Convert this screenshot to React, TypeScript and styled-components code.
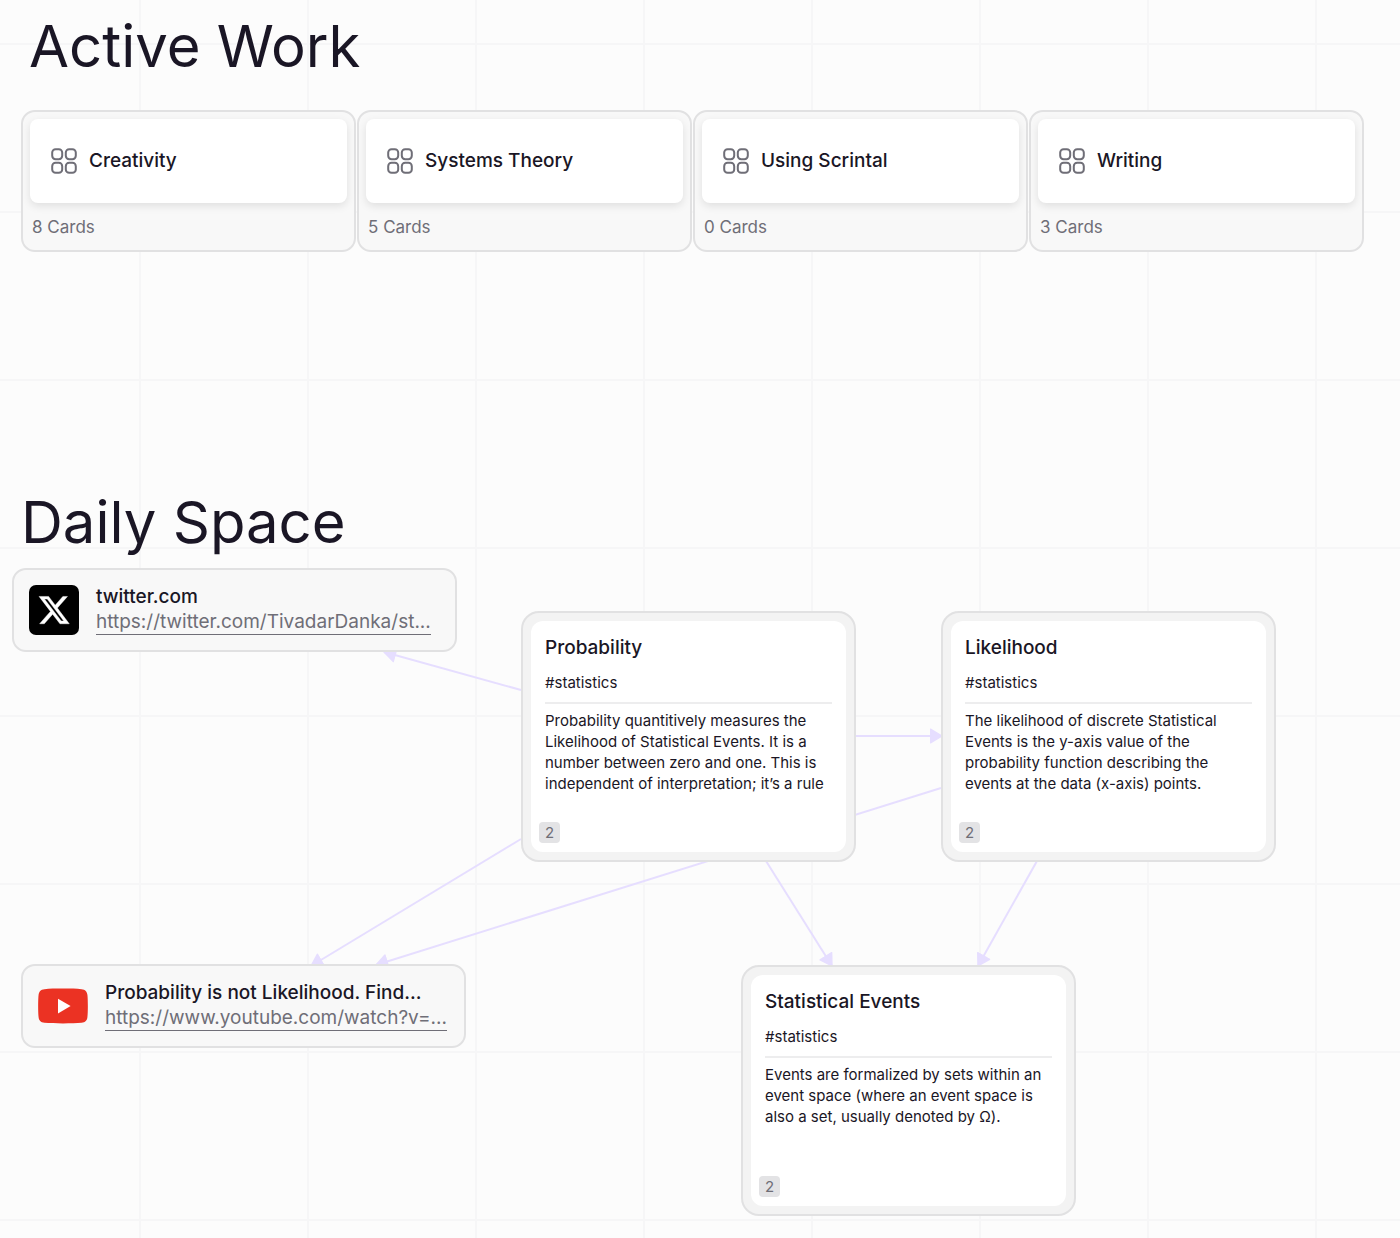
import React from "react";
import styled, { createGlobalStyle } from "styled-components";

const color = {
  canvas: "#fcfcfc",
  grid: "#f6f6f7",
  ink: "#1a1625",
  muted: "#6f6e77",
  border: "#e1e1e2",
  surface: "#f8f8f8",
  surfaceDeep: "#f3f3f3",
  arrow: "#e6deff",
};

const GlobalStyle = createGlobalStyle`
  * { box-sizing: border-box; }
  body {
    margin: 0;
    background: ${color.canvas};
    color: ${color.ink};
    font-family: Inter, "Liberation Sans", sans-serif;
  }
  h1, h2, p, ul { margin: 0; padding: 0; }
`;

const Canvas = styled.main`
  position: relative;
  min-height: 100vh;
  overflow: hidden;
  background-color: ${color.canvas};
  background-image: linear-gradient(90deg, ${color.grid} 2px, transparent 2px),
    linear-gradient(${color.grid} 2px, transparent 2px);
  background-size: 168px 168px;
  background-position: 139px 43px;
`;

const Node = styled.div<{ $x: number; $y: number }>`
  position: absolute;
  left: ${(p) => p.$x}px;
  top: ${(p) => p.$y}px;
`;

const Title = styled.h1`
  font-size: 58px;
  line-height: 72px;
  font-weight: 400;
  white-space: nowrap;
`;

const BoardRow = styled.ul`
  display: flex;
  gap: 1px;
  list-style: none;
`;

const Board = styled.li`
  width: 335px;
  padding: 7px;
  border: 2px solid ${color.border};
  border-radius: 14px;
  background: ${color.surface};
`;

const BoardFace = styled.div`
  display: flex;
  align-items: center;
  gap: 12px;
  height: 84px;
  padding: 0 21px;
  border-radius: 8px;
  background: #fff;
  box-shadow: 0 3px 8px rgba(0, 0, 0, 0.1);
`;

const ItemTitle = styled.h2`
  font-size: 19px;
  line-height: 24px;
  font-weight: 500;
  white-space: nowrap;
`;

const BoardCount = styled.p`
  padding: 12px 2px 4px;
  font-size: 17px;
  line-height: 24px;
  color: ${color.muted};
`;

const NoteFrame = styled.article`
  width: 335px;
  padding: 8px;
  border: 2px solid ${color.border};
  border-radius: 18px;
  background: ${color.surfaceDeep};
`;

const NoteFace = styled.div`
  display: flex;
  flex-direction: column;
  min-height: 231px;
  padding: 15px 14px 9px;
  border-radius: 12px;
  background: #fff;
`;

const NoteTag = styled.p`
  padding: 13px 0 9px;
  border-bottom: 2px solid #ededee;
  font-size: 15px;
  line-height: 20px;
`;

const NoteText = styled.p`
  padding-top: 6px;
  font-size: 15px;
  line-height: 21px;
`;

const Count = styled.span`
  align-self: flex-start;
  min-width: 21px;
  margin-top: auto;
  margin-left: -6px;
  border-radius: 4px;
  background: #e3e3e5;
  color: ${color.muted};
  font-size: 15px;
  line-height: 21px;
  text-align: center;
`;

const Bookmark = styled.article`
  display: flex;
  align-items: center;
  gap: 17px;
  width: 445px;
  height: 84px;
  padding: 0 15px;
  border: 2px solid ${color.border};
  border-radius: 14px;
  background: ${color.surface};
`;

const Link = styled.a`
  display: block;
  width: fit-content;
  border-bottom: 1px solid ${color.muted};
  color: ${color.muted};
  font-size: 19px;
  line-height: 25px;
  text-decoration: none;
  white-space: nowrap;
`;

const Arrows = styled.svg`
  position: absolute;
  left: 0;
  top: 0;
  overflow: visible;
`;

const BoardIcon = () => (
  <svg width="26" height="26" viewBox="0 0 26 26" fill="none" stroke={color.muted} strokeWidth="2" aria-hidden="true">
    <rect x="1.200" y="1.200" width="10" height="10" rx="3.400" />
    <rect x="14.800" y="1.200" width="10" height="10" rx="3.400" />
    <rect x="1.200" y="14.800" width="10" height="10" rx="3.400" />
    <rect x="14.800" y="14.800" width="10" height="10" rx="3.400" />
  </svg>
);

const XIcon = () => (
  <svg width="50" height="50" viewBox="0 0 50 50" aria-hidden="true">
    <rect width="50" height="50" rx="7" fill="#000" />
    <path
      transform="translate(8.3 8.3) scale(1.4)"
      fill="#fff"
      stroke="#fff"
      strokeWidth="0.3"
      d="M18.244 2.25h3.308l-7.227 8.26 8.502 11.24H16.17l-5.214-6.817L4.99 21.75H1.68l7.73-8.835L1.254 2.25H8.08l4.713 6.231zm-1.161 17.52h1.833L7.084 4.126H5.117z"
    />
  </svg>
);

const YouTubeIcon = () => (
  <svg width="50" height="50" viewBox="0 0 50 50" aria-hidden="true">
    <path
      fill="#eb3223"
      d="M25 7.6c-7 0-14 .1-18.500.6C2.600 8.700 1 10.500.6 13.800 0 18.500 0 31.500.6 36.200c.4 3.300 2 5.100 5.900 5.600 4.500.5 11.500.6 18.500.6s14-.1 18.500-.6c3.900-.5 5.500-2.300 5.900-5.600.6-4.700.6-17.700 0-22.400-.4-3.300-2-5.100-5.900-5.600C39 7.700 32 7.600 25 7.600z"
    />
    <path fill="#fff" d="M20 17.700v14.800l12.600-7.400z" />
  </svg>
);

const boards = [
  { name: "Creativity", cards: 8 },
  { name: "Systems Theory", cards: 5 },
  { name: "Using Scrintal", cards: 0 },
  { name: "Writing", cards: 3 },
];

const notes = [
  {
    x: 521,
    y: 611,
    title: "Probability",
    text: "Probability quantitively measures the Likelihood of Statistical Events. It is a number between zero and one. This is independent of interpretation; it’s a rule",
  },
  {
    x: 941,
    y: 611,
    title: "Likelihood",
    text: "The likelihood of discrete Statistical Events is the y-axis value of the probability function describing the events at the data (x-axis) points.",
  },
  {
    x: 741,
    y: 965,
    title: "Statistical Events",
    text: "Events are formalized by sets within an event space (where an event space is also a set, usually denoted by Ω).",
  },
];

const bookmarks = [
  {
    x: 12,
    y: 568,
    icon: <XIcon />,
    title: "twitter.com",
    href: "https://twitter.com/",
    label: "https://twitter.com/TivadarDanka/st...",
  },
  {
    x: 21,
    y: 964,
    icon: <YouTubeIcon />,
    title: "Probability is not Likelihood. Find...",
    href: "https://www.youtube.com/",
    label: "https://www.youtube.com/watch?v=...",
  },
];

const arrows = [
  [521, 690, 384, 652],
  [856, 736, 942, 736],
  [521, 839, 311, 966],
  [941, 788, 376, 965],
  [766, 861, 832, 966],
  [1037, 861, 978, 966],
];

export default function App() {
  return (
    <>
      <GlobalStyle />
      <Canvas>
        <Arrows width="1" height="1" aria-hidden="true">
          <defs>
            <marker
              id="head"
              markerUnits="userSpaceOnUse"
              markerWidth="14"
              markerHeight="16"
              refX="12.5"
              refY="8"
              orient="auto"
            >
              <path
                d="M1 1.200v13.600l11.500-6.800z"
                fill={color.arrow}
                stroke={color.arrow}
                strokeWidth="1.4"
                strokeLinejoin="round"
              />
            </marker>
          </defs>
          {arrows.map(([x1, y1, x2, y2]) => (
            <path
              key={`${x1}-${y1}`}
              d={`M${x1} ${y1}L${x2} ${y2}`}
              stroke={color.arrow}
              strokeWidth="2"
              markerEnd="url(#head)"
            />
          ))}
        </Arrows>

        <Node $x={29} $y={10}>
          <Title>Active Work</Title>
        </Node>
        <Node $x={21} $y={110}>
          <BoardRow>
            {boards.map((b) => (
              <Board key={b.name}>
                <BoardFace>
                  <BoardIcon />
                  <ItemTitle>{b.name}</ItemTitle>
                </BoardFace>
                <BoardCount>{b.cards} Cards</BoardCount>
              </Board>
            ))}
          </BoardRow>
        </Node>

        <Node $x={21} $y={486}>
          <Title>Daily Space</Title>
        </Node>
        {bookmarks.map((b) => (
          <Node key={b.title} $x={b.x} $y={b.y}>
            <Bookmark>
              {b.icon}
              <div>
                <ItemTitle>{b.title}</ItemTitle>
                <Link href={b.href}>{b.label}</Link>
              </div>
            </Bookmark>
          </Node>
        ))}
        {notes.map((n) => (
          <Node key={n.title} $x={n.x} $y={n.y}>
            <NoteFrame>
              <NoteFace>
                <ItemTitle>{n.title}</ItemTitle>
                <NoteTag>#statistics</NoteTag>
                <NoteText>{n.text}</NoteText>
                <Count>2</Count>
              </NoteFace>
            </NoteFrame>
          </Node>
        ))}
      </Canvas>
    </>
  );
}
